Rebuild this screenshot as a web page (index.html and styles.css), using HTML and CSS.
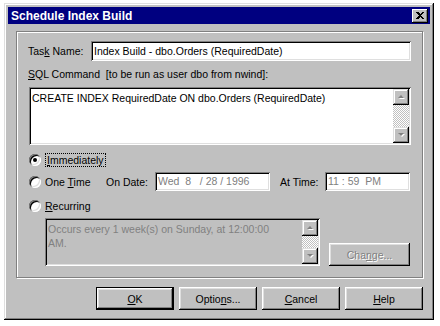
FILE: index.html
```html
<!DOCTYPE html>
<html lang="en">
<head>
    <meta charset="UTF-8">
    <title>Schedule Index Build</title>
    <link rel="stylesheet" href="styles.css">
</head>
<body>
    <div class="window">
        <div class="titlebar">
            <span class="title">Schedule Index Build</span>
            <span class="close">
                <svg width="8" height="7" viewBox="0 0 8 7" shape-rendering="crispEdges"><path d="M0 0h2l2 2 2-2h2L5 3.5 8 7H6L4 5 2 7H0l3-3.5z" fill="#000"/></svg>
            </span>
        </div>

        <div class="group">
            <div class="task-row">
                <span class="task-label">Tas<u>k</u> Name:</span>
                <div class="field task-field">Index Build - dbo.Orders (RequiredDate)</div>
            </div>

            <div class="sql-label"><u>S</u>QL Command&nbsp; [to be run as user dbo from nwind]:</div>
            <div class="field sql-field">
                <div class="sql-text">CREATE INDEX RequiredDate ON dbo.Orders (RequiredDate)</div>
                <div class="vscroll">
                    <span class="arrow"><svg width="7" height="5" viewBox="0 0 7 5"><polygon points="4,1 1,4 7,4" fill="#fff"/><polygon points="3,0 0,3 6,3" fill="#808080"/></svg></span>
                    <span class="track"></span>
                    <span class="arrow"><svg width="7" height="5" viewBox="0 0 7 5"><polygon points="1,1 7,1 4,4" fill="#fff"/><polygon points="0,0 6,0 3,3" fill="#808080"/></svg></span>
                </div>
            </div>

            <div class="opt opt-now">
                <span class="radio checked"></span>
                <span class="focus"><u>I</u>mmediately</span>
            </div>

            <div class="opt opt-once">
                <span class="radio"></span>
                <span class="once-label">One <u>T</u>ime</span>
                <span class="date-label">On Date:</span>
                <div class="field small date-field">Wed&nbsp; 8 &nbsp;&nbsp;/ 28 / 1996</div>
                <span class="time-label">At Time:</span>
                <div class="field small time-field">11 : 59 &nbsp;PM</div>
            </div>

            <div class="opt opt-recur">
                <span class="radio"></span>
                <span><u>R</u>ecurring</span>
            </div>

            <div class="recur-row">
                <div class="field recur-field">
                    <div class="recur-text">Occurs every 1 week(s) on Sunday, at 12:00:00<br>AM.</div>
                    <div class="vscroll">
                        <span class="arrow"><svg width="7" height="5" viewBox="0 0 7 5"><polygon points="4,1 1,4 7,4" fill="#fff"/><polygon points="3,0 0,3 6,3" fill="#808080"/></svg></span>
                        <span class="track"></span>
                        <span class="arrow"><svg width="7" height="5" viewBox="0 0 7 5"><polygon points="1,1 7,1 4,4" fill="#fff"/><polygon points="0,0 6,0 3,3" fill="#808080"/></svg></span>
                    </div>
                </div>
                <div class="btn disabled change">Cha<u>n</u>ge...</div>
            </div>
        </div>

        <div class="buttons">
            <div class="btn default"><u>O</u>K</div>
            <div class="btn">Optio<u>n</u>s...</div>
            <div class="btn"><u>C</u>ancel</div>
            <div class="btn"><u>H</u>elp</div>
        </div>
    </div>
</body>
</html>
```

FILE: styles.css
```css
body {
    margin: 0;
    background: #fff;
    font-family: "Liberation Sans", Arial, sans-serif;
    font-size: 10.5px;
    color: #000;
}

.window {
    box-sizing: border-box;
    margin: 3px 0 0 4px;
    width: 430px;
    height: 317px;
    padding: 4px;
    background: #c0c0c0;
    box-shadow: inset -1px -1px #000, inset 1px 1px #dfdfdf, inset -2px -2px #808080, inset 2px 2px #fff;
}

.titlebar {
    height: 17px;
    background: #000080;
    display: flex;
    align-items: center;
    justify-content: space-between;
    padding-left: 3px;
}

.title {
    color: #fff;
    font-weight: bold;
    font-size: 12px;
}

.close {
    box-sizing: border-box;
    width: 16px;
    height: 14px;
    margin-right: 2px;
    background: #c0c0c0;
    display: flex;
    align-items: center;
    justify-content: center;
    box-shadow: inset -1px -1px #000, inset 1px 1px #fff, inset -2px -2px #808080;
}

.group {
    box-sizing: border-box;
    margin: 7px 0 0 8px;
    width: 407px;
    height: 247px;
    padding: 9px 11px 0 11px;
    border: 1px solid #808080;
    box-shadow: inset 1px 1px #fff, 1px 1px #fff;
}

.field {
    box-sizing: border-box;
    background: #fff;
    box-shadow: inset 1px 1px #808080, inset -1px -1px #fff, inset 2px 2px #000, inset -2px -2px #dfdfdf;
}

.task-row {
    display: flex;
    align-items: center;
    height: 20px;
}

.task-label {
    width: 63px;
}

.task-field {
    width: 320px;
    height: 20px;
    padding: 0 3px;
    line-height: 20px;
}

.sql-label {
    margin-top: 6px;
    height: 14px;
    line-height: 14px;
}

.sql-field {
    display: flex;
    justify-content: space-between;
    margin: 6px 0 0 1px;
    width: 382px;
    height: 58px;
    padding: 2px;
}

.sql-text {
    padding: 3px 1px;
}

.vscroll {
    width: 16px;
    display: flex;
    flex-direction: column;
}

.arrow {
    box-sizing: border-box;
    width: 16px;
    height: 16px;
    background: #c0c0c0;
    display: flex;
    align-items: center;
    justify-content: center;
    box-shadow: inset -1px -1px #000, inset 1px 1px #dfdfdf, inset -2px -2px #808080, inset 2px 2px #fff;
}

.track {
    flex: 1;
    background-color: #c0c0c0;
    background-image: conic-gradient(#fff 25%, #c0c0c0 0 50%, #fff 0 75%, #c0c0c0 0);
    background-size: 2px 2px;
}

.opt {
    display: flex;
    align-items: center;
}

.opt-now {
    margin-top: 7px;
    height: 16px;
}

.opt-once {
    margin-top: 4px;
    height: 19px;
}

.opt-recur {
    margin-top: 7px;
    height: 15px;
}

.radio {
    width: 12px;
    height: 12px;
    margin: 0 4px 0 1px;
    border-radius: 50%;
    background: #fff;
    box-shadow: inset 1px 1px #808080, inset -1px -1px #fff, inset 2px 2px #000, inset -2px -2px #dfdfdf;
    display: flex;
    align-items: center;
    justify-content: center;
}

.radio.checked::after {
    content: "";
    width: 4px;
    height: 4px;
    border-radius: 50%;
    background: #000;
}

.focus {
    border: 1px dotted #000;
    padding: 0 1px;
    line-height: 12px;
}

.once-label {
    width: 61px;
}

.date-label {
    width: 49px;
}

.time-label {
    width: 45px;
    margin-left: 10px;
}

.small {
    height: 19px;
    line-height: 19px;
    padding: 0 3px;
    color: #808080;
}

.date-field {
    width: 115px;
}

.time-field {
    width: 85px;
}

.recur-row {
    display: flex;
    align-items: flex-end;
    margin-top: 5px;
    height: 48px;
}

.recur-field {
    display: flex;
    justify-content: space-between;
    margin-left: 17px;
    width: 275px;
    height: 48px;
    padding: 2px;
    background: #c0c0c0;
}

.recur-text {
    padding: 2px 1px;
    line-height: 14px;
    color: #808080;
}

.btn {
    box-sizing: border-box;
    width: 78px;
    height: 23px;
    display: flex;
    align-items: center;
    justify-content: center;
    background: #c0c0c0;
    box-shadow: inset -1px -1px #000, inset 1px 1px #fff, inset -2px -2px #808080, inset 2px 2px #dfdfdf;
}

.btn.default {
    border: 1px solid #000;
}

.btn.disabled {
    color: #808080;
    text-shadow: 1px 1px #fff;
}

.change {
    margin-left: 9px;
    width: 81px;
}

.buttons {
    display: flex;
    gap: 5px;
    margin: 9px 0 0 88px;
}
```
